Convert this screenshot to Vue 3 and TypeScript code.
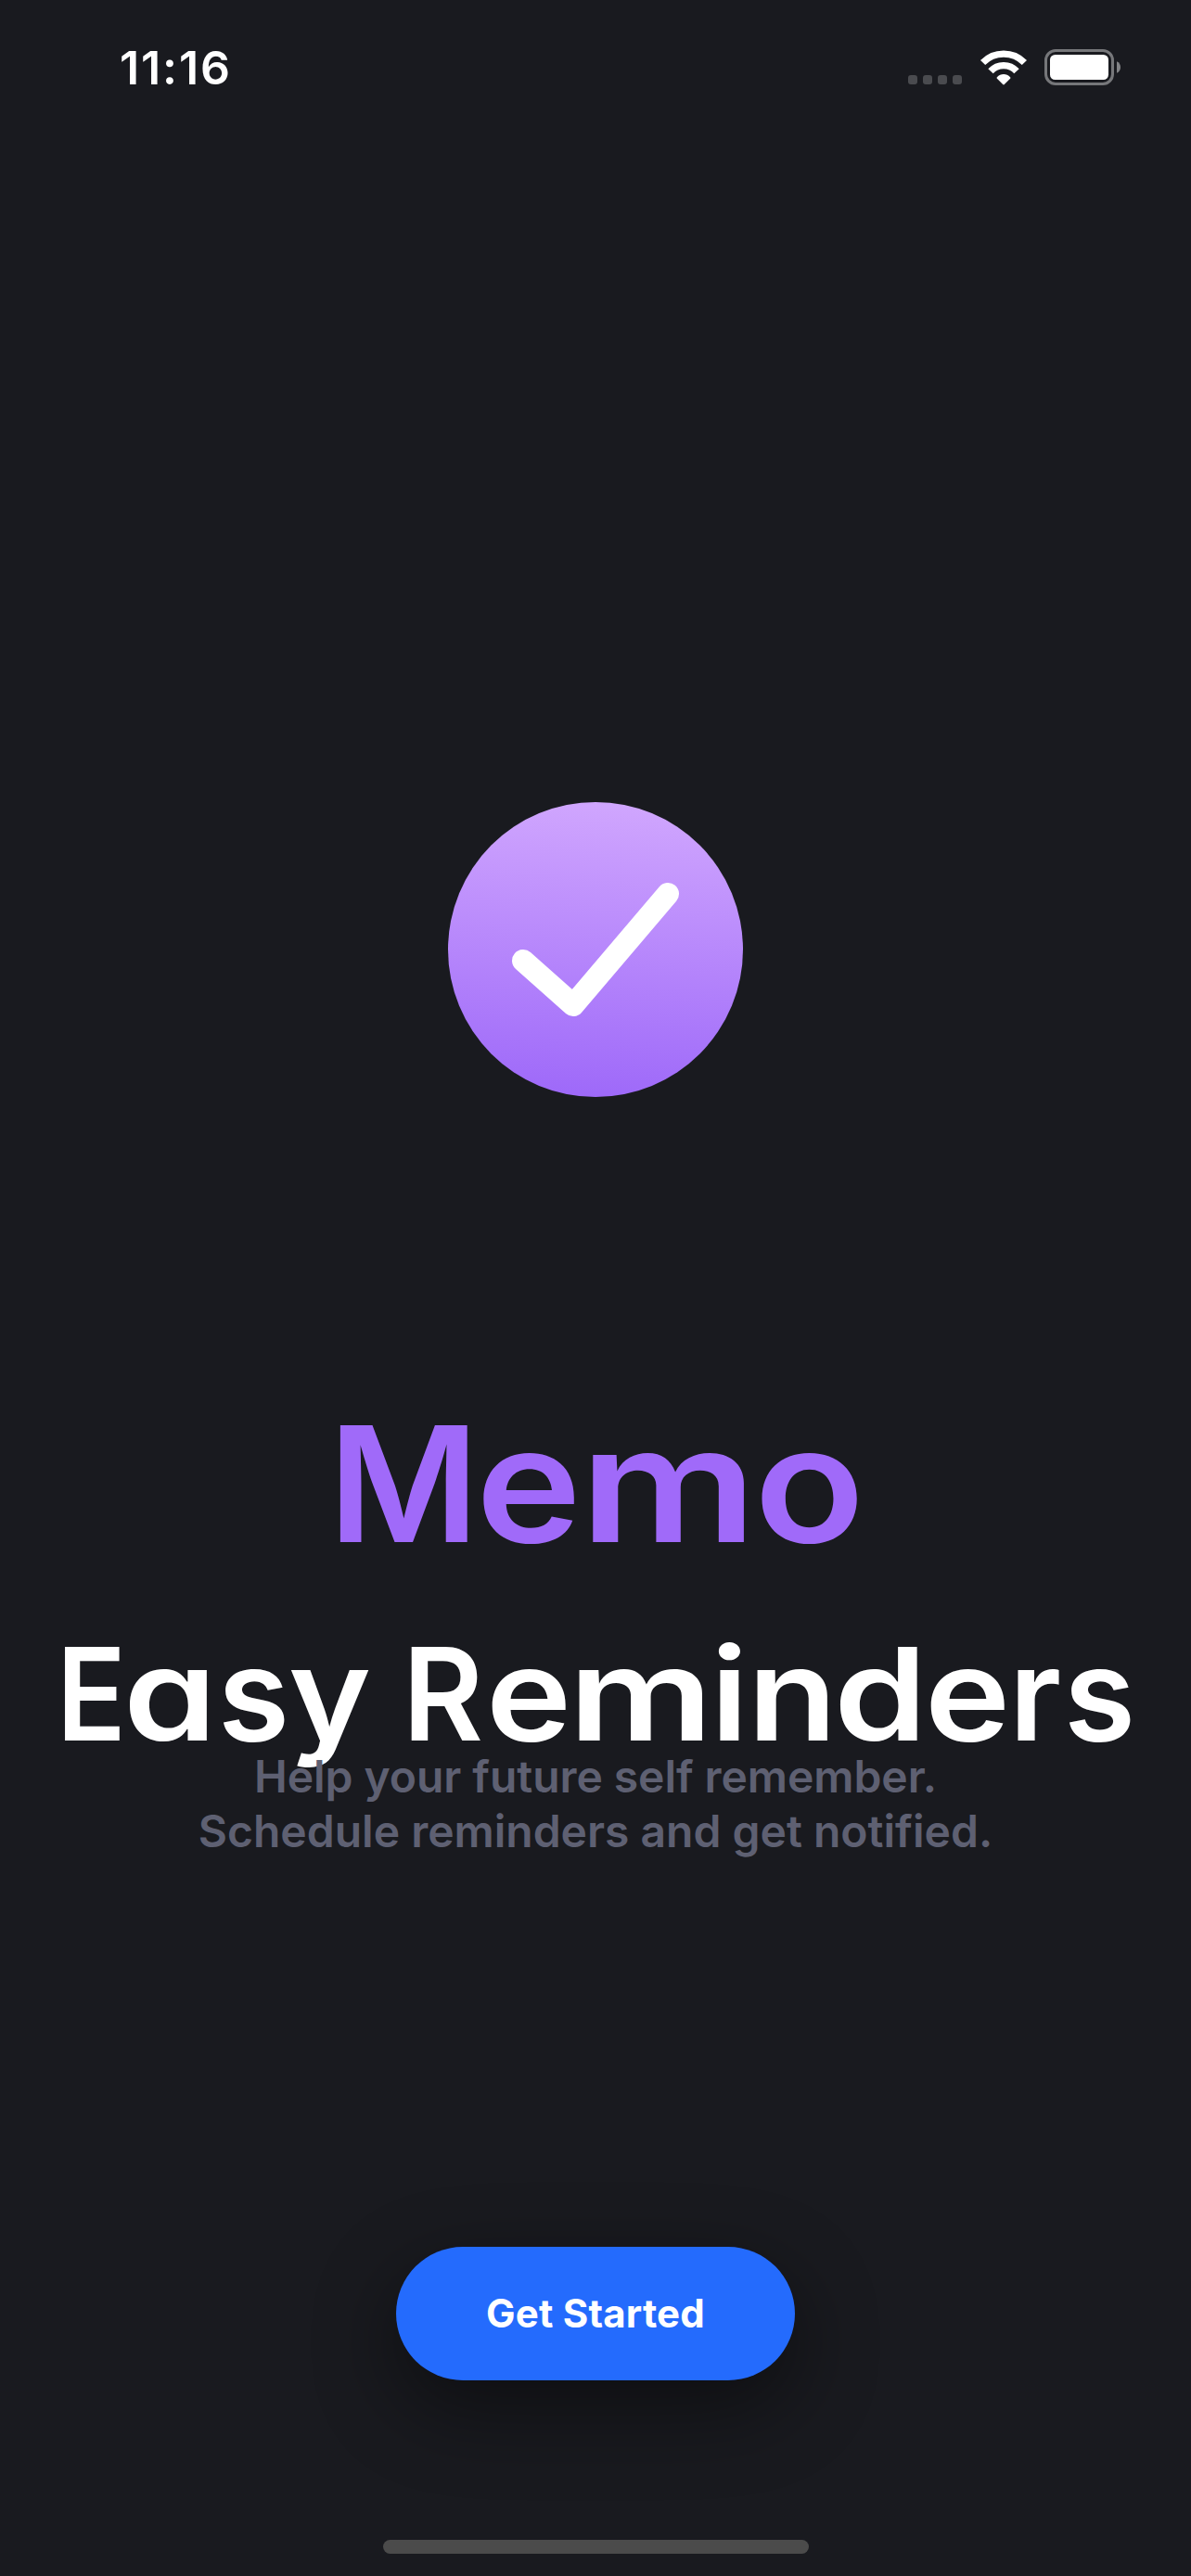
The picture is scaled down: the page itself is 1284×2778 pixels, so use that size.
<script setup lang="ts">
interface Glyph {
  char: string
  advance: number
  stretch: number
}

// Advance widths in px and horizontal proportions of the wide display lettering.
const brand: Glyph[] = [
  { char: 'M', advance: 159.4, stretch: 1.0185 },
  { char: 'e', advance: 111.7, stretch: 1.112 },
  { char: 'm', advance: 188.2, stretch: 1.228 },
  { char: 'o', advance: 117, stretch: 1.132 },
]

const headline: Glyph[] = [
  { char: 'E', advance: 72.4, stretch: 0.89 },
  { char: 'a', advance: 101.5, stretch: 1.16 },
  { char: 's', advance: 75.8, stretch: 1.01 },
  { char: 'y', advance: 89.2, stretch: 1.09 },
  { char: ' ', advance: 34.4, stretch: 1 },
  { char: 'R', advance: 89.9, stretch: 0.96 },
  { char: 'e', advance: 88.5, stretch: 1.12 },
  { char: 'm', advance: 153.4, stretch: 1.243 },
  { char: 'i', advance: 39.6, stretch: 1.12 },
  { char: 'n', advance: 93.1, stretch: 1.134 },
  { char: 'd', advance: 98.1, stretch: 1.156 },
  { char: 'e', advance: 90.8, stretch: 1.12 },
  { char: 'r', advance: 59.2, stretch: 1.02 },
  { char: 's', advance: 76, stretch: 1.01 },
]

const glyphStyle = (g: Glyph) => ({
  width: `${g.advance}px`,
  transform: `scaleX(${g.stretch})`,
})
</script>

<template>
  <main class="screen">
    <header class="status">
      <span class="time">11:16</span>
      <div class="indicators">
        <svg class="signal" width="58" height="10" viewBox="0 0 58 10">
          <rect v-for="n in 4" :key="n" :x="(n - 1) * 16" y="0" width="10" height="10" rx="3" />
        </svg>
        <svg width="52" height="38" viewBox="0 0 52 38" fill="none">
          <g stroke="#fff" stroke-width="7.3">
            <path d="M3.6 13.5A31.4 31.4 0 0 1 48.4 13.5" />
            <path d="M12 22.8A18.9 18.9 0 0 1 40 22.8" />
          </g>
          <path
            d="M18.9 29.2C22.8 24.9 29.2 24.9 33.1 29.2Q33.9 30 33.1 30.8L26.8 37.1Q26 37.8 25.2 37.1L18.9 30.8Q18.1 30 18.9 29.2Z"
            fill="#fff"
          />
        </svg>
        <svg width="82" height="39" viewBox="0 0 82 39" fill="none">
          <rect x="1.5" y="1.5" width="72" height="36" rx="10.5" stroke="#76777a" stroke-width="3" />
          <rect x="6" y="6" width="63" height="27" rx="5.5" fill="#fff" />
          <path d="M78 13.3C80.6 14.3 82 16.6 82 19.5C82 22.4 80.6 24.7 78 25.7Z" fill="#828386" />
        </svg>
      </div>
    </header>

    <svg class="logo" width="318" height="318" viewBox="0 0 318 318" fill="none">
      <defs>
        <linearGradient id="badge" x1="168" y1="0" x2="150" y2="318" gradientUnits="userSpaceOnUse">
          <stop offset="0" stop-color="#d0a6fe" />
          <stop offset="1" stop-color="#9e69f9" />
        </linearGradient>
      </defs>
      <circle cx="159" cy="159" r="159" fill="url(#badge)" />
      <path
        d="M81 171L135 219L237 99"
        stroke="#fff"
        stroke-width="24"
        stroke-linecap="round"
        stroke-linejoin="round"
      />
    </svg>

    <h1 class="brand"><span v-for="(g, i) in brand" :key="i" class="glyph" :style="glyphStyle(g)">{{ g.char }}</span></h1>
    <h2 class="headline"><span v-for="(g, i) in headline" :key="i" class="glyph" :style="glyphStyle(g)">{{ g.char }}</span></h2>
    <p class="copy"><span class="lead">Help your future self remember.</span><br />Schedule reminders and get notified.</p>

    <button class="start" type="button">Get Started</button>
    <div class="home-bar"></div>
  </main>
</template>

<style>
body {
  margin: 0;
  background: #191a1f;
}
</style>

<style scoped>
.screen {
  display: flex;
  flex-direction: column;
  align-items: center;
  box-sizing: border-box;
  width: 1284px;
  height: 2778px;
  overflow: hidden;
  background: #191a1f;
  color: #fff;
  font-family: Inter, 'Liberation Sans', sans-serif;
}

.status {
  display: flex;
  align-items: center;
  justify-content: space-between;
  box-sizing: border-box;
  width: 100%;
  height: 145px;
  padding: 0 76px 0 129px;
}

.time {
  font-size: 50px;
  font-weight: 600;
  line-height: 60px;
  letter-spacing: 1.9px;
}

.indicators {
  display: flex;
  align-items: center;
  gap: 18.5px;
}

.signal {
  align-self: flex-end;
  margin-bottom: 1px;
  fill: #4a4b4f;
}

.logo {
  margin-top: 720px;
}

.glyph {
  display: inline-block;
  white-space: pre;
  transform-origin: left center;
}

.brand,
.headline {
  display: flex;
  margin: 0;
  font-weight: 600;
  font-feature-settings: 'cv11';
}

.brand {
  margin-top: 317px;
  color: #a06af9;
  font-size: 173px;
  line-height: 200px;
}

.headline {
  margin-top: 67px;
  margin-bottom: -1px;
  font-size: 139px;
  line-height: 120px;
}

.copy {
  position: relative;
  margin: 0;
  color: #5e6072;
  font-size: 48px;
  font-weight: 600;
  line-height: 59px;
  text-align: center;
}

.lead {
  letter-spacing: -0.06px;
}

.start {
  flex: none;
  width: 430px;
  height: 144px;
  margin-top: 419px;
  padding: 0;
  border: 0;
  border-radius: 72px;
  background: #246bfd;
  box-shadow: 0 30px 90px rgba(0, 0, 0, 0.45);
  color: #fff;
  font: 700 42px/50px Inter, 'Liberation Sans', sans-serif;
  letter-spacing: 0.2px;
}

.home-bar {
  flex: none;
  width: 459px;
  height: 15px;
  margin-top: 172px;
  border-radius: 8px;
  background: #4b4b4b;
}
</style>
